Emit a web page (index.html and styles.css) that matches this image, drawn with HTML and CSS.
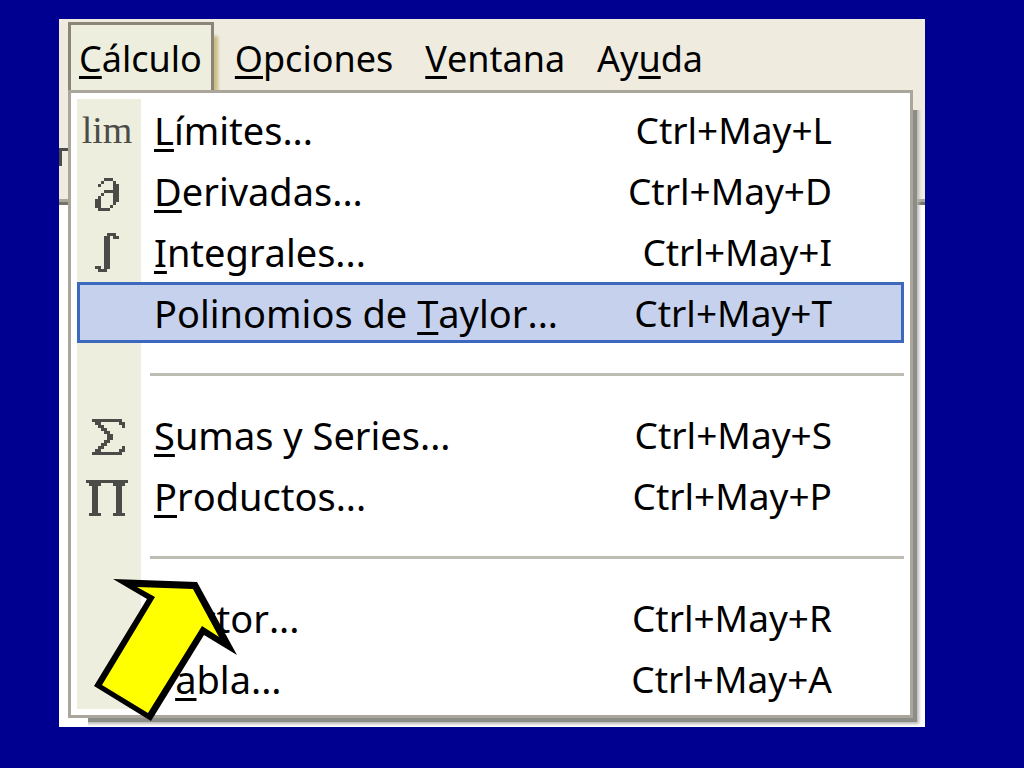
FILE: index.html
```
<!DOCTYPE html>
<html lang="es">
<head>
<meta charset="utf-8">
<title>Menú Cálculo</title>
<link rel="stylesheet" href="styles.css">
</head>
<body>
<main class="app">
  <nav class="menubar" aria-label="Menú principal">
    <button class="tab tab-open" type="button"><u>C</u>álculo</button>
    <button class="tab" type="button"><u>O</u>pciones</button>
    <button class="tab" type="button"><u>V</u>entana</button>
    <button class="tab" type="button">Ay<u>u</u>da</button>
  </nav>
  <div class="menu">
    <div class="items">
      <button class="item" type="button"><span class="icon lim">lim</span><span class="label"><u>L</u>ímites...</span><span class="keys">Ctrl+May+L</span></button>
      <button class="item" type="button"><svg class="icon" viewBox="0 0 64 61" aria-hidden="true"><path transform="translate(18 18) scale(3)" d="M3 0h3v1h-3zM2 1h1v1h-1zM6 1h1v1h-1zM1 2h1v1h-1zM6 2h2v6h-2zM3 4h3v1h-3zM2 5h1v1h-1zM1 6h1v1h-1zM0 7h2v3h-2zM6 8h1v1h-1zM5 9h1v1h-1zM1 10h4v1h-4z"/></svg><span class="label"><u>D</u>erivadas...</span><span class="keys">Ctrl+May+D</span></button>
      <button class="item" type="button"><svg class="icon" viewBox="0 0 64 61" aria-hidden="true"><path transform="translate(18 12) scale(3)" d="M4 0h3v1h-3zM6 1h2v1h-2zM3 1h2v11h-2zM0 11h2v1h-2zM1 12h3v1h-3z"/></svg><span class="label"><u>I</u>ntegrales...</span><span class="keys">Ctrl+May+I</span></button>
      <button class="item selected" type="button"><span class="icon"></span><span class="label">Polinomios de <u>T</u>aylor...</span><span class="keys">Ctrl+May+T</span></button>
      <div class="separator" role="separator"></div>
      <button class="item" type="button"><svg class="icon" viewBox="0 0 64 61" aria-hidden="true"><path transform="translate(15 15) scale(3)" d="M0 0h10v1h1v2h-1v-1h-1v-1h-6v1h1v1h1v1h1v1h1v2h-1v1h-1v1h-1v1h-1v1h6v-1h1v-1h1v2h-1v1h-10v-1h1v-1h1v-1h1v-1h1v-1h1v-2h-1v-1h-1v-1h-1v-1h-1v-1h-1z"/></svg><span class="label"><u>S</u>umas y Series...</span><span class="keys">Ctrl+May+S</span></button>
      <button class="item" type="button"><svg class="icon" viewBox="0 0 64 61" aria-hidden="true"><path transform="translate(9 15) scale(3)" d="M0 0h14v1h-1v1h-1v9h1v1h-4v-1h1v-9h-1v-1h-4v1h-1v9h1v1h-4v-1h1v-9h-1v-1h-1z"/></svg><span class="label"><u>P</u>roductos...</span><span class="keys">Ctrl+May+P</span></button>
      <div class="separator" role="separator"></div>
      <button class="item" type="button"><span class="icon"></span><span class="label"><u>V</u>ector...</span><span class="keys">Ctrl+May+R</span></button>
      <button class="item" type="button"><span class="icon"></span><span class="label">T<u>a</u>bla...</span><span class="keys">Ctrl+May+A</span></button>
    </div>
    <svg class="arrow" viewBox="94 579 144 143" aria-hidden="true">
      <path d="M113 579L197 582 237 655 204 635 151 721 94 686 147 599z"/>
      <path class="arrow-fill" d="M137 587L193 589 219 637 202 626 148 713 102 685 155 597z"/>
    </svg>
  </div>
</main>
</body>
</html>
```
FILE: styles.css
```
* {
  box-sizing: border-box;
}

body {
  margin: 0;
  padding: 19px 99px 41px 59px;
  background: #000090;
  color: #000;
  font-family: "Noto Sans", "Open Sans", sans-serif;
  font-size: 37px;
  font-kerning: none;
  line-height: 50px;
}

button {
  margin: 0;
  border: 0;
  background: none;
  color: inherit;
  font: inherit;
  font-kerning: none;
  text-align: left;
  white-space: nowrap;
}

u {
  text-decoration-thickness: 3px;
  text-underline-offset: 4px;
  text-decoration-skip-ink: none;
}

.app {
  position: relative;
  padding: 3px 12px 9px 9px;
  background: linear-gradient(#efebdf 0 180px, #aaa69c 180px 183px, #77736b 183px 186px, #fff 186px);
}

/* Edge of a toolbar glyph left of the open menu */
.app::before {
  content: "";
  position: absolute;
  left: 0;
  top: 129px;
  width: 9px;
  height: 15px;
  border-top: 3px solid #4b4b47;
  border-left: 3px solid #4b4b47;
}

.menubar {
  display: flex;
  gap: 10px;
}

.tab {
  height: 68px;
  padding: 12px 11px 8px;
  font-size: 36px;
}

.tab-open {
  padding: 9px 9px 8px 8px;
  border: 3px solid #8b8579;
  border-bottom: 0;
  background: #edeedd;
  box-shadow: 6px 12px 3px -2px #c8bd83;
}

.menu {
  position: relative;
  padding: 6px;
  border: 3px solid #aaa69c;
  background: #fff;
  box-shadow: 4px 4px 0 #8c8d86, 6px 6px 3px #b9b7b4;
  clip-path: polygon(0 0, 100% 0, 100% 20px, calc(100% + 12px) 20px, calc(100% + 12px) calc(100% + 9px), 20px calc(100% + 9px), 20px 100%, 0 100%);
}

.items {
  display: flex;
  flex-direction: column;
  background: linear-gradient(90deg, #edeedd 64px, #fff 64px);
}

.item {
  display: grid;
  grid-template-columns: 64px 1fr auto;
  align-items: center;
  width: 100%;
  height: 61px;
  padding: 0 72px 0 0;
}

.selected {
  background: #c6d2ed;
  box-shadow: inset 0 0 0 3px #3c69bd;
}

.icon {
  width: 64px;
  fill: #4b4b47;
  shape-rendering: crispEdges;
}

.lim {
  padding-right: 4px;
  color: #4b4b47;
  font-family: "Liberation Serif", serif;
  font-size: 38px;
  text-align: center;
}

.label {
  padding-left: 13px;
  font-size: 38px;
}

.separator {
  height: 61px;
  margin-left: 73px;
  padding-top: 30px;
}

.separator::before {
  content: "";
  display: block;
  height: 3px;
  background: #bdbdb3;
}

.arrow {
  position: absolute;
  left: 23px;
  bottom: -7px;
  width: 144px;
  height: 143px;
}

.arrow-fill {
  fill: #ff0;
}
```
